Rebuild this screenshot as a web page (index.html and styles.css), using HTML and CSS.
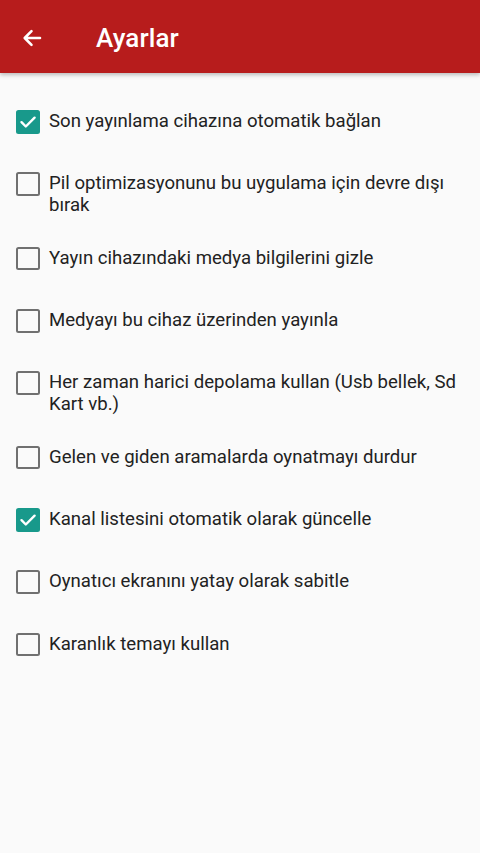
FILE: index.html
```html
<!DOCTYPE html>
<html lang="tr">
<head>
<meta charset="utf-8">
<title>Ayarlar</title>
<link rel="stylesheet" href="styles.css">
</head>
<body>
<header class="appbar">
  <svg class="back" width="24" height="24" viewBox="0 0 24 24"><path d="M20 12H5M11.5 5.2L4.7 12l6.8 6.8" fill="none" stroke="#fff" stroke-width="2.6" stroke-linecap="round" stroke-linejoin="round"/></svg>
  <h1 class="title">Ayarlar</h1>
</header>
<main class="list">
  <div class="row"><span class="box checked"><svg viewBox="0 0 24 24" width="24" height="24"><path d="M5.5 12.2l4.3 4.3 8.8-8.8" fill="none" stroke="#fff" stroke-width="2.4" stroke-linecap="round" stroke-linejoin="round"/></svg></span><span class="label">Son yayınlama cihazına otomatik bağlan</span></div>
  <div class="row"><span class="box"></span><span class="label">Pil optimizasyonunu bu uygulama için devre dışı bırak</span></div>
  <div class="row"><span class="box"></span><span class="label">Yayın cihazındaki medya bilgilerini gizle</span></div>
  <div class="row"><span class="box"></span><span class="label">Medyayı bu cihaz üzerinden yayınla</span></div>
  <div class="row"><span class="box"></span><span class="label">Her zaman harici depolama kullan (Usb bellek, Sd Kart vb.)</span></div>
  <div class="row"><span class="box"></span><span class="label">Gelen ve giden aramalarda oynatmayı durdur</span></div>
  <div class="row"><span class="box checked"><svg viewBox="0 0 24 24" width="24" height="24"><path d="M5.5 12.2l4.3 4.3 8.8-8.8" fill="none" stroke="#fff" stroke-width="2.4" stroke-linecap="round" stroke-linejoin="round"/></svg></span><span class="label">Kanal listesini otomatik olarak güncelle</span></div>
  <div class="row"><span class="box"></span><span class="label">Oynatıcı ekranını yatay olarak sabitle</span></div>
  <div class="row"><span class="box"></span><span class="label">Karanlık temayı kullan</span></div>
</main>
</body>
</html>
```
FILE: styles.css
```css
html, body {
  margin: 0;
  padding: 0;
  background: #fafafa;
  font-family: Roboto, "Noto Sans", "Liberation Sans", sans-serif;
}
body {
  width: 480px;
  min-height: 853px;
}
.appbar {
  height: 73px;
  background: #b71c1c;
  display: flex;
  align-items: center;
  box-shadow: 0 2px 4px rgba(0,0,0,0.25);
  position: relative;
}
.back {
  margin-left: 20px;
  margin-top: 2px;
}
.title {
  margin: 0 0 0 52px;
  color: #fff;
  font-size: 26px;
  font-weight: 500;
  letter-spacing: 0.1px;
  padding-top: 3px;
}
.list {
  padding-top: 22px;
}
.row {
  box-sizing: border-box;
  min-height: 62.3px;
  padding: 14.5px 16px 15.5px 16px;
  display: flex;
  align-items: flex-start;
  gap: 9px;
}
.box {
  flex: none;
  box-sizing: border-box;
  width: 24px;
  height: 23.5px;
  border: 2.4px solid #707070;
  border-radius: 2.5px;
  margin-top: 0.5px;
  display: flex;
  align-items: center;
  justify-content: center;
}
.box.checked {
  background: #18998b;
  border-color: #18998b;
}
.box svg {
  flex: none;
}
.label {
  font-size: 18.6px;
  line-height: 22px;
  color: #222;
  padding-top: 0.5px;
}
```
